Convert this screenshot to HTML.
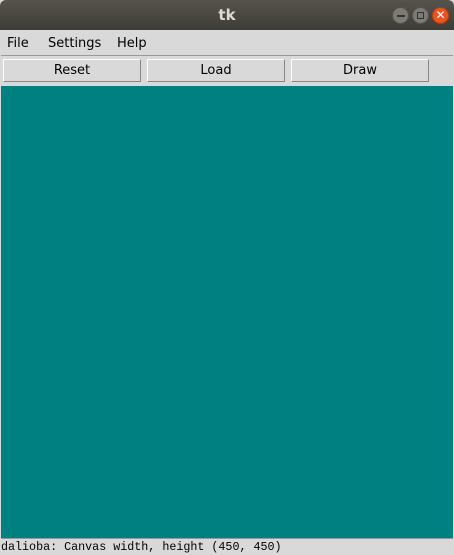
<!DOCTYPE html>
<html><head><style>
body{margin:0;width:454px;height:554px;overflow:hidden;background:#d9d9d9;position:relative;font-family:"DejaVu Sans","Liberation Sans",sans-serif;}
.title{position:absolute;left:0;top:0;width:454px;height:30px;background:linear-gradient(#56534c,#3e3c37);border-radius:6px 6px 0 0;}
.title span{position:absolute;left:0;right:0;top:6px;text-align:center;color:#dfdbd2;font-weight:bold;font-size:15px;}
.wb{position:absolute;top:7px;width:17px;height:17px;border-radius:50%;background:#7d7b75;border:1px solid #55534d;box-sizing:border-box;}
.menu{position:absolute;left:1px;top:31px;width:452px;height:24px;background:#d9d9d9;border-bottom:1px solid #9a9a9a;font-size:13px;}
.menu span{position:absolute;top:5px;color:#000;}
.btn{position:absolute;top:59px;width:138px;height:23px;box-sizing:border-box;border:1px solid;border-color:#fff #888 #888 #fff;background:#d9d9d9;text-align:center;font-size:13px;line-height:22px;}
.canvas{position:absolute;left:1px;top:86px;width:452px;height:452px;background:#008080;}
.status{position:absolute;left:1px;top:538px;width:452px;height:16px;border-top:1px solid #999;font-family:"Liberation Mono","DejaVu Sans Mono",monospace;font-size:11.7px;line-height:16px;color:#000;}
</style></head><body>
<div class="title"><span>tk</span>
<div class="wb" style="left:392px"><div style="position:absolute;left:4px;top:7px;width:8px;height:1.5px;background:#333"></div></div>
<div class="wb" style="left:412px"><div style="position:absolute;left:4px;top:4px;width:7px;height:7px;border:1.5px solid #333;box-sizing:border-box"></div></div>
<div class="wb" style="left:432px;background:#e95420;border-color:#b53e12;color:#fff;font-size:12px;line-height:14px;text-align:center">✕</div>
</div>
<div class="menu"><span style="left:6px">File</span><span style="left:47px">Settings</span><span style="left:116px">Help</span></div>
<div class="btn" style="left:3px">Reset</div>
<div class="btn" style="left:147px">Load</div>
<div class="btn" style="left:291px">Draw</div>
<div class="canvas"></div>
<div class="status">dalioba: Canvas width, height (450, 450)</div>
</body></html>
